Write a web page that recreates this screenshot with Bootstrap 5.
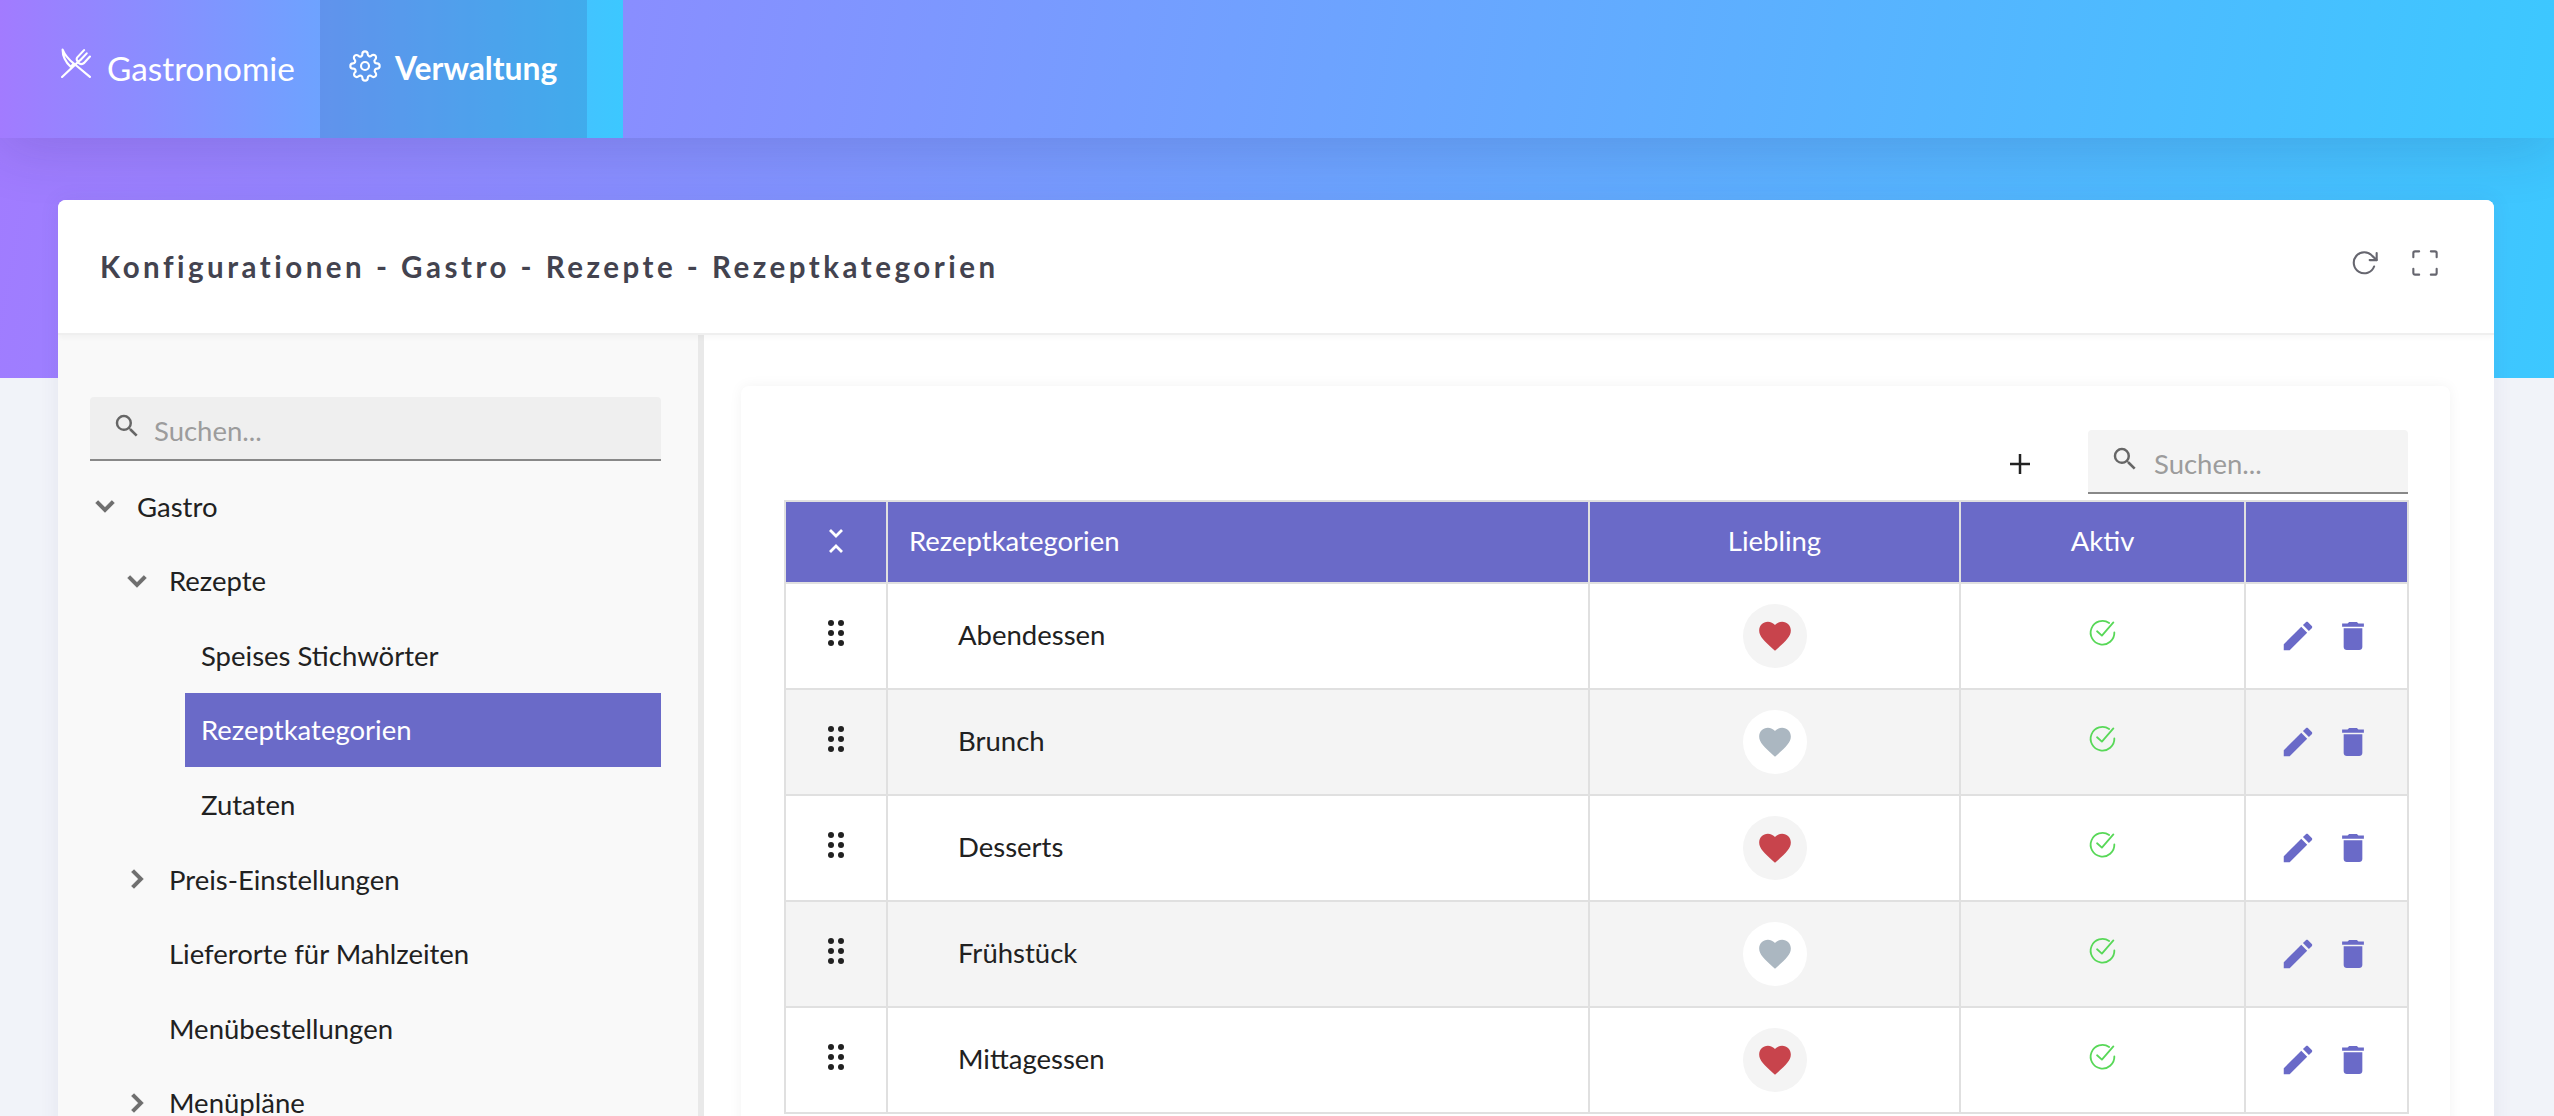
<!DOCTYPE html>
<html lang="de">
<head>
  <meta charset="UTF-8" />
  <title>Rezeptkategorien</title>
  <link href="https://cdn.jsdelivr.net/npm/bootstrap@5.3.0/dist/css/bootstrap.min.css" rel="stylesheet" />
  <style>
    html, body { height: 100%; overflow: hidden; }
    body {
      font-family: Lato, "Noto Sans", sans-serif;
      color: #212121;
      background: linear-gradient(100deg, #a27bff 0%, #3cc8ff 100%) top / 100% 378px no-repeat, #f1f3f9;
    }
    .topbar {
      height: 138px;
      background: linear-gradient(100deg, #a27bff 0%, #3cc8ff 100%);
      box-shadow: 0 10px 60px rgba(40, 40, 90, .16);
      position: relative;
    }
    .topnav { width: 623px; height: 138px; background: linear-gradient(90deg, #a27bff 0%, #3cc8ff 100%); }
    .topnav a { display: flex; align-items: center; height: 138px; color: #fff; text-decoration: none; }
    .topnav a.gastro { width: 320px; padding-left: 61px; gap: 16px; font-size: 33.3px; }
    .topnav a.gastro svg { margin-bottom: 12px; }
    .topnav a.verw { width: 267px; padding-left: 29px; gap: 14px; background: rgba(60, 100, 180, .25); font-weight: 700; font-size: 31.8px; }
    .topnav a.verw svg { margin-bottom: 6px; }
    .page-wrap { padding: 62px 60px 0 58px; }
    .cfg-card { border: 0; border-radius: 8px 8px 0 0; overflow: hidden; box-shadow: 0 0 20px rgba(60, 60, 110, .08); }
    .cfg-head {
      height: 135px; padding: 0 55px 0 42px; background: #fff; border-bottom: 2px solid #efefef;
      box-shadow: 0 2px 6px rgba(0, 0, 0, .04); position: relative;
    }
    .cfg-title { font-size: 29.5px; font-weight: 700; letter-spacing: 3.5px; color: #43434f; margin: 0; }
    .tree-pane { width: 646px; flex: none; background: #f9f9f9; padding: 62px 37px 0 32px; border-right: 6px solid #e9e9e9; height: 790px; }
    .search-box {
      height: 64px; display: flex; align-items: center; gap: 12px; padding: 6px 0 0 22px;
      background: #efefef; border-bottom: 2px solid #888; border-radius: 4px 4px 0 0;
      color: #9c9c9c; font-size: 27.5px;
    }
    .search-box svg { margin-top: -10px; color: #666; }
    .search-box.right { width: 320px; gap: 14px; background: #f4f4f4; }
    .tree-list { margin: 8px 0 0; padding: 0; list-style: none; font-size: 27.5px; }
    .tree-row { height: 74.6px; display: flex; align-items: center; }
    .tree-row .arrow { width: 47px; flex: none; display: flex; color: #6f6f6f; }
    .tree-row .arrow svg { margin-left: -3px; stroke: #6f6f6f; stroke-width: .7px; }
    .lvl-0 { padding-left: 0; }
    .lvl-1 { padding-left: 32px; }
    .lvl-2 { margin-left: 95px; padding-left: 16px; }
    .tree-row.current { background: #6a6ac8; color: #fff; }
    .main-pane { flex: 1; min-width: 0; background: #fff; padding: 51px 44px 0 37px; }
    .inner-panel { background: #fff; border-radius: 8px 8px 0 0; box-shadow: 0 0 14px rgba(0, 0, 0, .05); padding: 44px 43px 0 43px; height: 760px; }
    .table-tools { height: 70px; margin-right: -1px; }
    .add-btn { width: 40px; margin-right: 48px; display: flex; justify-content: center; padding-bottom: 2px; }
    .cat-table { width: 1623px; table-layout: fixed; border-collapse: collapse; margin: 0; font-size: 27.5px; }
    .cat-table th, .cat-table td { border: 2px solid #e0e0e0; padding: 0; vertical-align: middle; }
    .cat-table th { background: #6a6ac8; color: #fff; font-weight: 400; height: 82px; padding-bottom: 2px; }
    .cat-table td { height: 106px; }
    .cat-table tr:nth-child(even) td { background: #f4f4f4; }
    .cat-table td.cat-name { padding: 0 0 2px 70px; }
    .cat-table th.head-name { padding-left: 21px; }
    .heart-wrap { width: 64px; height: 64px; border-radius: 50%; background: #f4f4f4; display: inline-flex; align-items: center; justify-content: center; }
    tr:nth-child(even) .heart-wrap { background: #fff; }
    .drag-dots { display: grid; grid-template-columns: 6px 6px; gap: 4px; width: 16px; margin: -6px auto 0; }
    .drag-dots i { width: 6px; height: 6px; border-radius: 50%; background: #222; display: block; }
    .aktiv-icon { display: block; margin: -8px auto 0; }
    .row-actions { gap: 25px; padding-right: 11px; }
  </style>
</head>
<body>
  <svg width="0" height="0" class="d-none">
    <symbol id="ic-search" viewBox="0 0 24 24"><path fill="currentColor" d="M15.5 14h-.79l-.28-.27A6.47 6.47 0 0 0 16 9.5 6.5 6.5 0 1 0 9.5 16c1.61 0 3.09-.59 4.23-1.57l.27.28v.79l5 4.99L20.49 19l-4.99-5zm-6 0C7.01 14 5 11.99 5 9.5S7.01 5 9.5 5 14 7.01 14 9.5 11.99 14 9.5 14z"/></symbol>
    <symbol id="ic-down" viewBox="0 0 24 24"><path fill="currentColor" d="M16.59 8.59 12 13.17 7.41 8.59 6 10l6 6 6-6z"/></symbol>
    <symbol id="ic-right" viewBox="0 0 24 24"><path fill="currentColor" d="M10 6 8.59 7.41 13.17 12l-4.58 4.59L10 18l6-6z"/></symbol>
    <symbol id="ic-edit" viewBox="0 0 24 24"><path fill="#6a6ac8" d="M3 17.25V21h3.75L17.81 9.94l-3.75-3.75L3 17.25zM20.71 7.04c.39-.39.39-1.02 0-1.41l-2.34-2.34c-.39-.39-1.02-.39-1.41 0l-1.83 1.83 3.75 3.75 1.83-1.83z"/></symbol>
    <symbol id="ic-trash" viewBox="5 3 14 18"><path fill="#6a6ac8" d="M6 19c0 1.1.9 2 2 2h8c1.1 0 2-.9 2-2V7H6v12zM19 4h-3.5l-1-1h-5l-1 1H5v2h14V4z"/></symbol>
    <symbol id="ic-heart" viewBox="0 0 24 24"><path fill="currentColor" d="M12 21.35l-1.45-1.32C5.4 15.36 2 12.28 2 8.5 2 5.42 4.42 3 7.5 3c1.74 0 3.41.81 4.5 2.09C13.09 3.81 14.76 3 16.5 3 19.58 3 22 5.42 22 8.5c0 3.78-3.4 6.86-8.55 11.54L12 21.35z"/></symbol>
    <symbol id="ic-check" viewBox="0 0 24 24"><path fill="none" stroke="#58d858" stroke-width="1.5" stroke-linecap="round" stroke-linejoin="round" d="M17.500 4.100A9.800 9.800 0 1 0 21.800 12M7.500 11l4 3.600 9.500-11"/></symbol>
  </svg>

  <header class="topbar">
    <div class="topnav d-flex">
      <a class="gastro" href="#">
        <svg width="30" height="30" viewBox="0 0 28 28" fill="none" stroke="#fff" stroke-width="2" stroke-linecap="round" stroke-linejoin="round"><path d="M1.500 1.500c2 5 6 9.500 10.500 13l-3 3C4.500 13.500 1.500 8 1.500 1.500zM12 14.500 27 27M1 27 17 12M15 9l6.500-7M18 11.500l6-6.500M15 9c-1 2 0 3.500 1.500 5s3.500 1 5 0l5.500-6"/></svg>
        Gastronomie
      </a>
      <a class="verw" href="#">
        <svg width="32" height="32" viewBox="0 0 24 24" fill="none" stroke="#fff" stroke-width="1.600" stroke-linecap="round" stroke-linejoin="round"><circle cx="12" cy="12" r="3"/><path d="M19.4 15a1.65 1.65 0 0 0 .33 1.82l.06.06a2 2 0 1 1-2.83 2.83l-.06-.06a1.65 1.65 0 0 0-2.82 1.17V21a2 2 0 1 1-4 0v-.09A1.65 1.65 0 0 0 7.260 19.700l-.06.06a2 2 0 1 1-2.83-2.83l.06-.06A1.65 1.65 0 0 0 3.090 14H3a2 2 0 1 1 0-4h.09A1.65 1.65 0 0 0 4.300 7.260l-.06-.06A2 2 0 1 1 7.070 4.370l.06.06A1.65 1.65 0 0 0 10 3.090V3a2 2 0 1 1 4 0v.09a1.65 1.65 0 0 0 2.820 1.170l.06-.06a2 2 0 1 1 2.830 2.830l-.06.06A1.65 1.65 0 0 0 20.910 10H21a2 2 0 1 1 0 4h-.09a1.65 1.65 0 0 0-1.510 1z"/></svg>
        Verwaltung
      </a>
    </div>
  </header>

  <main class="page-wrap">
    <div class="card cfg-card">
      <div class="cfg-head d-flex align-items-center justify-content-between">
        <h1 class="cfg-title">Konfigurationen - Gastro - Rezepte - Rezeptkategorien</h1>
        <div class="d-flex align-items-center gap-4 mb-2">
          <svg width="28" height="28" viewBox="0 0 24 24" fill="none" stroke="#66666f" stroke-width="1.800" stroke-linecap="round" stroke-linejoin="round"><path d="M22 3.500v6h-6"/><path d="M19.800 15a9 9 0 1 1-1.600-9.100L22 9.500"/></svg>
          <svg width="28" height="28" class="ms-2" viewBox="0 0 24 24" fill="none" stroke="#66666f" stroke-width="1.800" stroke-linecap="round" stroke-linejoin="round"><path d="M2 7V3.500A1.500 1.500 0 0 1 3.500 2H7M17 2h3.500A1.500 1.500 0 0 1 22 3.500V7M22 17v3.500a1.500 1.500 0 0 1-1.500 1.500H17M7 22H3.500A1.500 1.500 0 0 1 2 20.500V17"/></svg>
        </div>
      </div>
      <div class="d-flex">
        <aside class="tree-pane">
          <div class="search-box">
            <svg width="30" height="30"><use href="#ic-search"/></svg>
            <span>Suchen...</span>
          </div>
          <ul class="tree-list" id="tree"></ul>
        </aside>
        <section class="main-pane">
          <div class="inner-panel">
            <div class="table-tools d-flex justify-content-end align-items-start">
              <div class="add-btn align-self-center">
                <svg width="24" height="24" viewBox="0 0 24 24"><path stroke="#222" stroke-width="2.500" d="M12 2v20M2 12h20"/></svg>
              </div>
              <div class="search-box right">
                <svg width="30" height="30"><use href="#ic-search"/></svg>
                <span>Suchen...</span>
              </div>
            </div>
            <table class="cat-table">
              <colgroup>
                <col style="width:102px"><col style="width:702px"><col style="width:371px"><col style="width:285px"><col style="width:163px">
              </colgroup>
              <thead>
                <tr>
                  <th class="text-center">
                    <svg width="16" height="26" viewBox="0 0 16 26" fill="none" stroke="#fff" stroke-width="2.800" class="d-block mx-auto"><path d="M2 2l6 6 6-6M2 24l6-6 6 6"/></svg>
                  </th>
                  <th class="head-name">Rezeptkategorien</th>
                  <th class="text-center">Liebling</th>
                  <th class="text-center">Aktiv</th>
                  <th></th>
                </tr>
              </thead>
              <tbody id="zeilen"></tbody>
            </table>
          </div>
        </section>
      </div>
    </div>
  </main>

  <script>
    const baum = [
      ['Gastro', 0, 'down'],
      ['Rezepte', 1, 'down'],
      ['Speises Stichwörter', 2],
      ['Rezeptkategorien', 2, null, true],
      ['Zutaten', 2],
      ['Preis-Einstellungen', 1, 'right'],
      ['Lieferorte für Mahlzeiten', 1, ''],
      ['Menübestellungen', 1, ''],
      ['Menüpläne', 1, 'right']
    ];
    document.getElementById('tree').innerHTML = baum.map(([text, lvl, pfeil, aktiv]) => {
      let icon = '';
      if (pfeil) icon = `<span class="arrow"><svg width="36" height="36"><use href="#ic-${pfeil}"/></svg></span>`;
      if (pfeil === '') icon = '<span class="arrow"></span>';
      return `<li class="tree-row lvl-${lvl} ${aktiv ? 'current' : ''}">${icon}<span>${text}</span></li>`;
    }).join('');

    const kategorien = [
      ['Abendessen', true], ['Brunch', false], ['Desserts', true],
      ['Frühstück', false], ['Mittagessen', true]
    ];
    document.getElementById('zeilen').innerHTML = kategorien.map(([name, liebling]) => `
      <tr>
        <td><div class="drag-dots">${'<i></i>'.repeat(6)}</div></td>
        <td class="cat-name">${name}</td>
        <td class="text-center"><span class="heart-wrap" style="color:${liebling ? '#c8444c' : '#abb7c1'}"><svg width="38" height="38"><use href="#ic-heart"/></svg></span></td>
        <td><svg width="29" height="29" class="aktiv-icon"><use href="#ic-check"/></svg></td>
        <td><div class="row-actions d-flex align-items-center justify-content-center"><svg width="38" height="38"><use href="#ic-edit"/></svg><svg width="22" height="28"><use href="#ic-trash"/></svg></div></td>
      </tr>`).join('');
  </script>
  <script src="https://cdn.jsdelivr.net/npm/bootstrap@5.3.0/dist/js/bootstrap.bundle.min.js"></script>
</body>
</html>
